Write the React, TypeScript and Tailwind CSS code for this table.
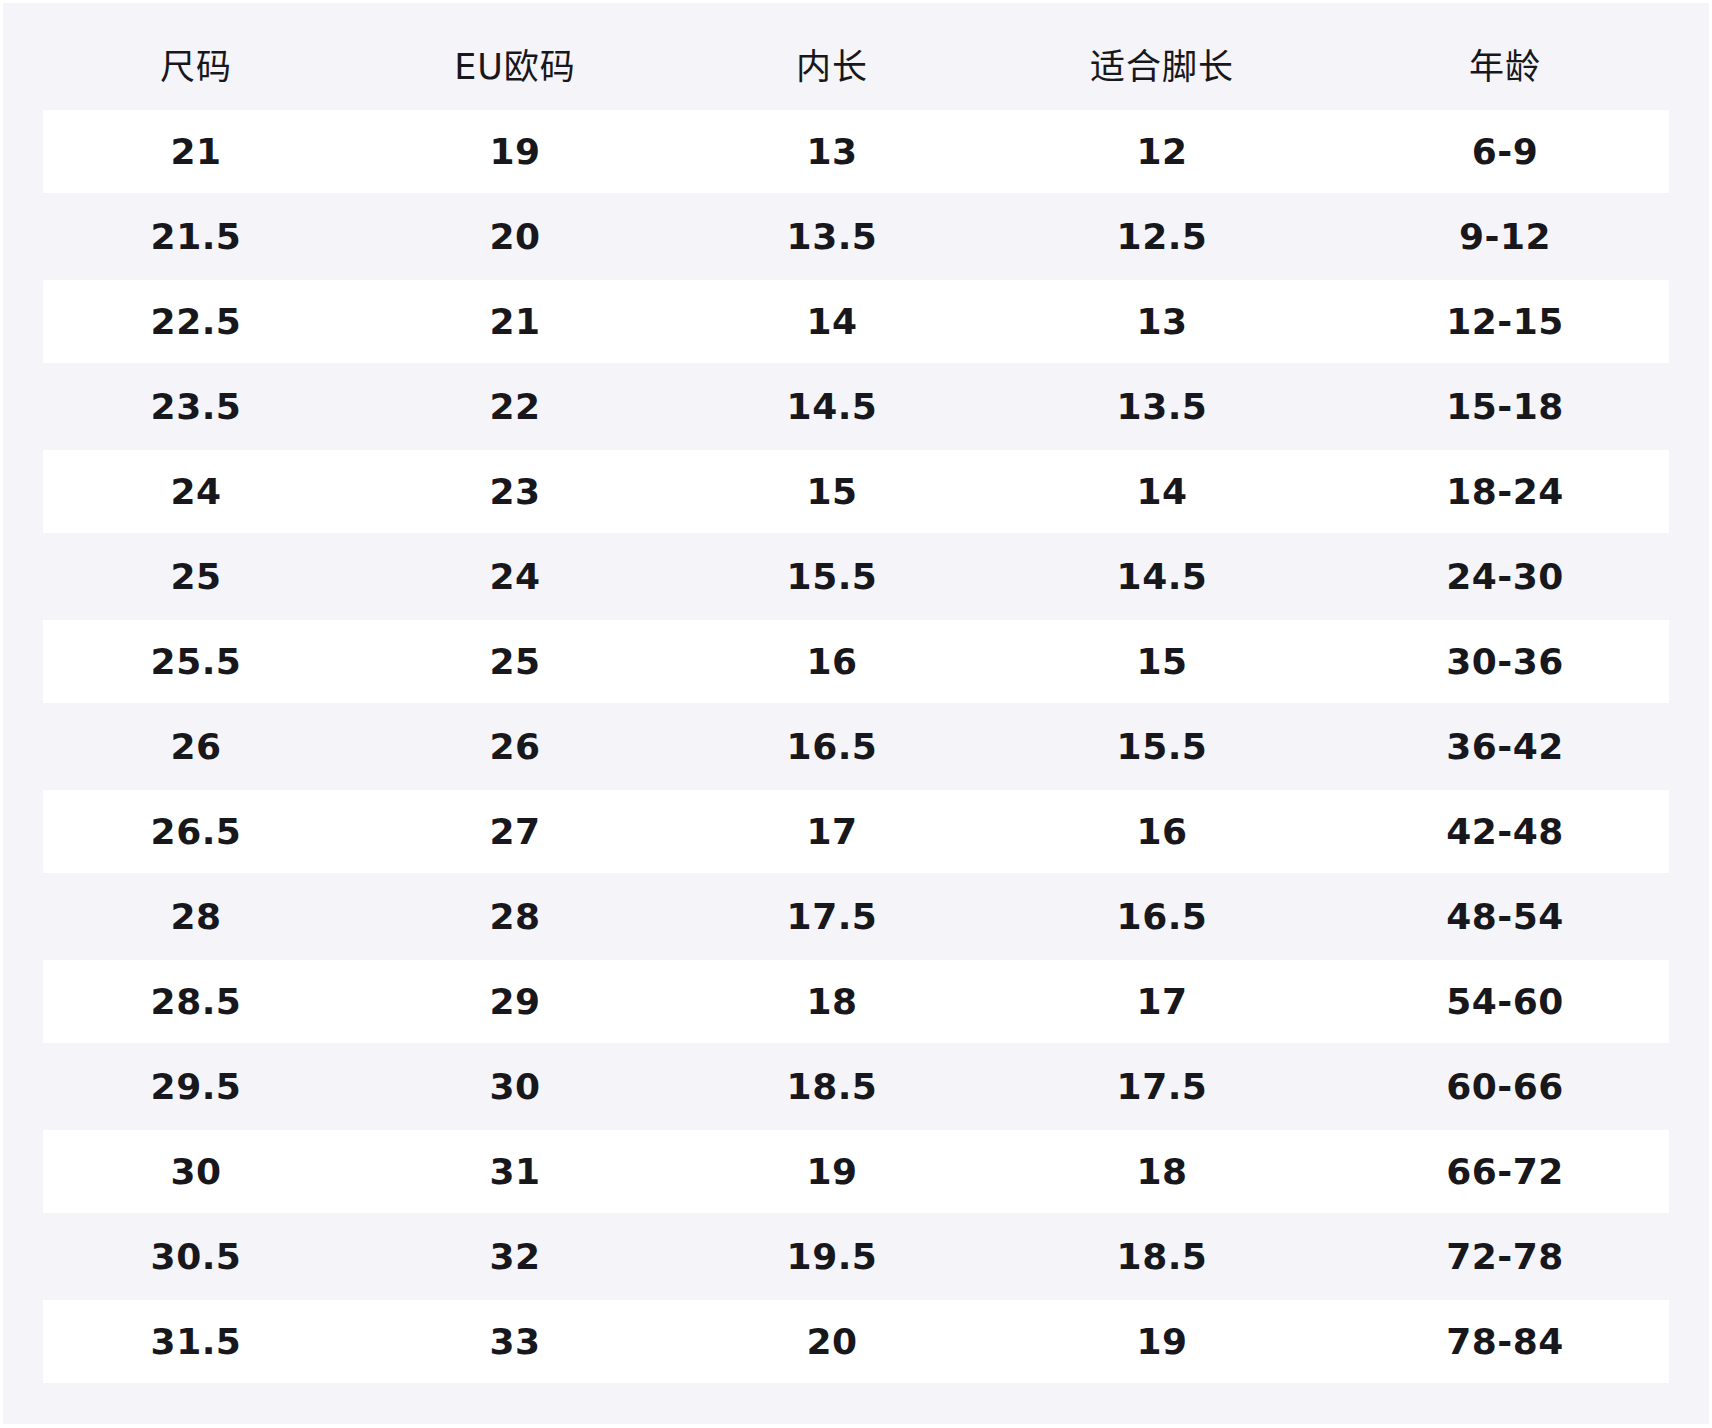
import React from "react";

const headers = ["尺码", "EU欧码", "内长", "适合脚长", "年龄"];
const rows: string[][] = [
  ["21", "19", "13", "12", "6-9"],
  ["21.5", "20", "13.5", "12.5", "9-12"],
  ["22.5", "21", "14", "13", "12-15"],
  ["23.5", "22", "14.5", "13.5", "15-18"],
  ["24", "23", "15", "14", "18-24"],
  ["25", "24", "15.5", "14.5", "24-30"],
  ["25.5", "25", "16", "15", "30-36"],
  ["26", "26", "16.5", "15.5", "36-42"],
  ["26.5", "27", "17", "16", "42-48"],
  ["28", "28", "17.5", "16.5", "48-54"],
  ["28.5", "29", "18", "17", "54-60"],
  ["29.5", "30", "18.5", "17.5", "60-66"],
  ["30", "31", "19", "18", "66-72"],
  ["30.5", "32", "19.5", "18.5", "72-78"],
  ["31.5", "33", "20", "19", "78-84"],
];

const cols = "grid grid-cols-[306px_332px_302px_358px_328px]";

export default function App() {
  return (
    <div className="w-[1712px] h-[1428px] bg-white p-[3px] font-['DejaVu_Sans','Noto_Sans_CJK_SC',sans-serif] text-[#17171c]">
      <div className="w-[1706px] h-[1421px] bg-[#f4f4f9] px-[40px]">
        <div className={`${cols} h-[107px] pt-[44px]`}>
          {headers.map((h) => (
            <div key={h} className="text-center text-[35px] leading-[40px] tracking-[1px] font-normal">
              {h}
            </div>
          ))}
        </div>
        {rows.map((r, i) => (
          <div
            key={i}
            className={`${cols} items-center ${i % 2 === 0 ? "bg-white h-[83px]" : "h-[87px]"}`}
          >
            {r.map((c, j) => (
              <div key={j} className="text-center text-[36px] leading-[40px] tracking-[0.5px] font-bold">
                {c}
              </div>
            ))}
          </div>
        ))}
      </div>
    </div>
  );
}
